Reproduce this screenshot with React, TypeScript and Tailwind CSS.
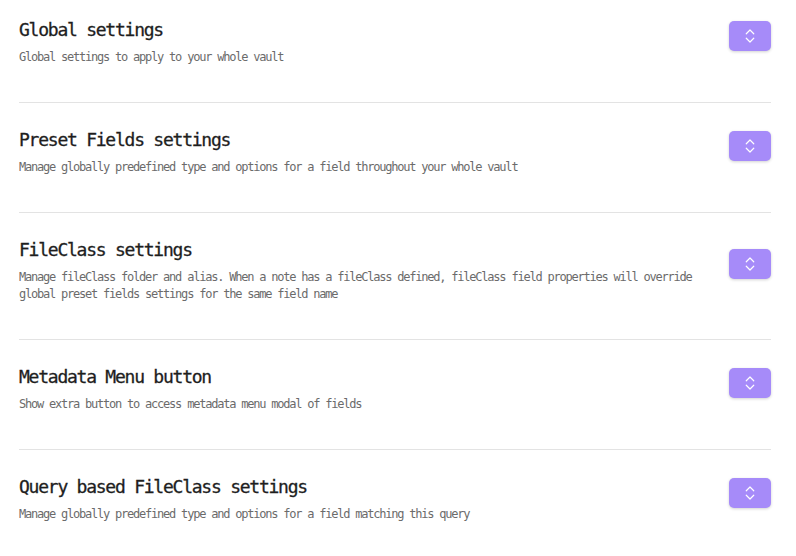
import { ChevronsUpDown } from "lucide-react"

const sections = [
  { title: "Global settings", desc: "Global settings to apply to your whole vault" },
  { title: "Preset Fields settings", desc: "Manage globally predefined type and options for a field throughout your whole vault" },
  {
    title: "FileClass settings",
    desc: "Manage fileClass folder and alias. When a note has a fileClass defined, fileClass field properties will override global preset fields settings for the same field name",
  },
  { title: "Metadata Menu button", desc: "Show extra button to access metadata menu modal of fields" },
  { title: "Query based FileClass settings", desc: "Manage globally predefined type and options for a field matching this query" },
]

export default function App() {
  return (
    <div className="min-h-screen bg-white pl-[19px] pr-[25px] font-['DejaVu_Sans_Mono',monospace]">
      {sections.map((s, i) => (
        <div
          key={s.title}
          className={`flex items-center gap-5 pb-[36px] ${i === 0 ? "pt-[18px]" : "pt-[25px]"} ${
            i < sections.length - 1 ? "border-b border-[#e3e3e3]" : ""
          }`}
        >
          <div className="flex-1">
            <h2 className="text-[18px] leading-[24px] font-normal tracking-[-1.24px] text-[#1e1e1e] [-webkit-text-stroke:0.3px_#1e1e1e]">
              {s.title}
            </h2>
            <p className="mt-[7px] text-[12px] leading-[17px] tracking-[-1.22px] text-[#6b6b6b]">{s.desc}</p>
          </div>
          <button className="mb-[13px] flex h-[30px] w-[42px] shrink-0 items-center justify-center rounded-[5px] bg-[#a68bf9] shadow-[0_1px_3px_rgba(0,0,0,0.18)]">
            <ChevronsUpDown className="h-[18px] w-[18px] text-white" strokeWidth={1.6} />
          </button>
        </div>
      ))}
    </div>
  )
}
